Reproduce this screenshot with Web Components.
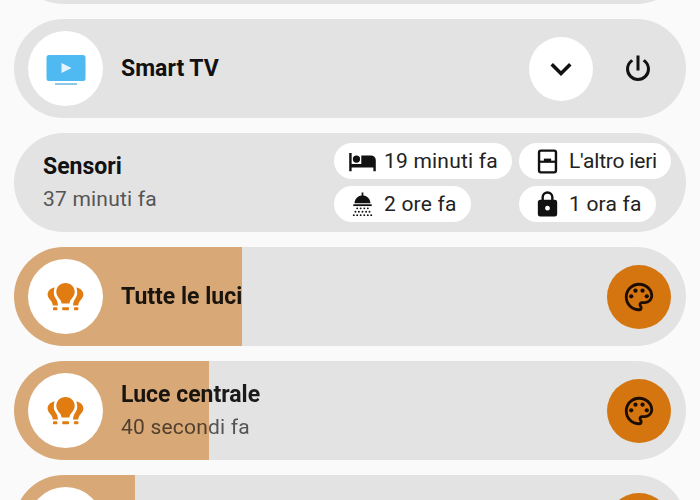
<!DOCTYPE html>
<html lang="it">
<head>
<meta charset="utf-8">
<title>Home</title>
<style>
    html, body { margin: 0; height: 100%; overflow: hidden; background: #fafafa; }
    body { font-family: Roboto, "Liberation Sans", sans-serif; }
</style>
</head>
<body>
<home-list>
    <home-card></home-card>

    <home-card>
        <icon-disc slot="icon">
            <svg style="margin-top:3px" width="40" height="30" viewBox="0 0 40 30">
                <rect x="0.5" y="0" width="39" height="26" rx="2.5" fill="#4fb9f2"/>
                <path d="M15.5 8L25.5 13L15.5 18Z" fill="#e4f4fd"/>
                <rect x="9" y="28" width="22" height="2" fill="#8cc9e6"/>
            </svg>
        </icon-disc>
        <span slot="title">Smart TV</span>
        <round-button slot="actions" kind="white">
            <svg width="42" height="42" viewBox="0 0 24 24"><path fill="#111" d="M7.41,8.58L12,13.17L16.59,8.58L18,10L12,16L6,10L7.41,8.58Z"/></svg>
        </round-button>
        <round-button slot="actions">
            <svg width="36" height="36" viewBox="0 0 24 24"><path fill="#111" d="M16.56,5.44L15.11,6.89C16.84,7.94 18,9.83 18,12A6,6 0 0,1 12,18A6,6 0 0,1 6,12C6,9.83 7.16,7.94 8.88,6.88L7.44,5.44C5.36,6.88 4,9.28 4,12A8,8 0 0,0 12,20A8,8 0 0,0 20,12C20,9.28 18.64,6.88 16.56,5.44M13,3H11V13H13"/></svg>
        </round-button>
    </home-card>

    <sensor-card title="Sensori" sub="37 minuti fa">
        <sensor-chip>
            <svg slot="icon" width="29" height="29" viewBox="0 0 24 24"><path d="M19,7H11V14H3V5H1V20H3V17H21V20H23V11A4,4 0 0,0 19,7M7,13A3,3 0 0,0 10,10A3,3 0 0,0 7,7A3,3 0 0,0 4,10A3,3 0 0,0 7,13Z"/></svg>
            19 minuti fa
        </sensor-chip>
        <sensor-chip style="letter-spacing:-.2px">
            <svg slot="icon" width="29" height="29" viewBox="0 0 24 24">
                <rect x="5" y="3" width="14" height="18" rx="1.5" fill="none" stroke="#111" stroke-width="2"/>
                <path d="M5 12.2H19" stroke="#111" stroke-width="1.8"/>
                <path d="M9 12V9.6H15V12Z"/>
            </svg>
            L'altro ieri
        </sensor-chip>
        <sensor-chip>
            <svg slot="icon" width="29" height="29" viewBox="0 0 24 24">
                <path d="M11.3 2H12.7V4.6C16 5 18.4 7.6 18.6 11H5.4C5.6 7.6 8 5 11.3 4.6Z"/>
                <rect x="4.4" y="11.8" width="15.2" height="1.5"/>
                <g>
                    <circle cx="7.6" cy="15.2" r=".8"/><circle cx="10.5" cy="15.2" r=".8"/><circle cx="13.5" cy="15.2" r=".8"/><circle cx="16.4" cy="15.2" r=".8"/>
                    <circle cx="6.2" cy="18" r=".8"/><circle cx="9" cy="18" r=".8"/><circle cx="12" cy="18" r=".8"/><circle cx="15" cy="18" r=".8"/><circle cx="17.8" cy="18" r=".8"/>
                    <circle cx="4.8" cy="20.8" r=".8"/><circle cx="7.6" cy="20.8" r=".8"/><circle cx="10.5" cy="20.8" r=".8"/><circle cx="13.5" cy="20.8" r=".8"/><circle cx="16.4" cy="20.8" r=".8"/><circle cx="19.2" cy="20.8" r=".8"/>
                </g>
            </svg>
            2 ore fa
        </sensor-chip>
        <sensor-chip>
            <svg slot="icon" width="29" height="29" viewBox="0 0 24 24"><path d="M12,17A2,2 0 0,0 14,15C14,13.89 13.1,13 12,13A2,2 0 0,0 10,15A2,2 0 0,0 12,17M18,8A2,2 0 0,1 20,10V20A2,2 0 0,1 18,22H6A2,2 0 0,1 4,20V10C4,8.89 4.9,8 6,8H7V6A5,5 0 0,1 12,1A5,5 0 0,1 17,6V8H18M12,3A3,3 0 0,0 9,6V8H15V6A3,3 0 0,0 12,3Z"/></svg>
            1 ora fa
        </sensor-chip>
    </sensor-card>

    <light-card name="Tutte le luci" level="228"></light-card>
    <light-card name="Luce centrale" sub="40 secondi fa" level="195"></light-card>
    <light-card level="121"></light-card>
</home-list>

<script>
class HomeList extends HTMLElement {
    constructor() {
        super();
        this.attachShadow({ mode: 'open' });
        this.shadowRoot.innerHTML = `
            <style>
                :host { display: flex; flex-direction: column; gap: 15px; padding: 0 14px; margin-top: -95px; }
            </style>
            <slot></slot>`;
    }
}
customElements.define('home-list', HomeList);

class HomeCard extends HTMLElement {
    constructor() {
        super();
        this.attachShadow({ mode: 'open' });
        this.shadowRoot.innerHTML = `
            <style>
                :host { display: flex; align-items: center; height: 99px; box-sizing: border-box; padding: 0 14px; background: #e3e3e3; border-radius: 50px; color: #111; }
                .text { flex: 1; margin-left: 18px; font-size: 23px; font-weight: 700; }
                .actions { display: flex; align-items: center; gap: 13px; margin-right: 2px; }
            </style>
            <slot name="icon"></slot>
            <div class="text"><slot name="title"></slot></div>
            <div class="actions"><slot name="actions"></slot></div>`;
    }
}
customElements.define('home-card', HomeCard);

class IconDisc extends HTMLElement {
    constructor() {
        super();
        this.attachShadow({ mode: 'open' });
        this.shadowRoot.innerHTML = `
            <style>
                :host { display: flex; align-items: center; justify-content: center; flex: none; width: 75px; height: 75px; border-radius: 50%; background: #fff; position: relative; z-index: 2; }
            </style>
            <slot></slot>`;
    }
}
customElements.define('icon-disc', IconDisc);

class RoundButton extends HTMLElement {
    constructor() {
        super();
        this.attachShadow({ mode: 'open' });
        this.shadowRoot.innerHTML = `
            <style>
                :host { display: flex; align-items: center; justify-content: center; flex: none; width: 64px; height: 64px; border-radius: 50%; position: relative; z-index: 2; }
                :host([kind="white"]) { background: #fff; }
                :host([kind="accent"]) { background: #d4750f; }
            </style>
            <slot></slot>`;
    }
}
customElements.define('round-button', RoundButton);

class SensorChip extends HTMLElement {
    constructor() {
        super();
        this.attachShadow({ mode: 'open' });
        this.shadowRoot.innerHTML = `
            <style>
                :host { display: inline-flex; align-items: center; gap: 7px; height: 36px; box-sizing: border-box; padding: 0 14px; background: #fff; border-radius: 18px; font-size: 21px; letter-spacing: .2px; color: #222; white-space: nowrap; justify-self: start; }
                slot[name="icon"]::slotted(svg) { fill: #111; }
            </style>
            <slot name="icon"></slot>
            <slot></slot>`;
    }
}
customElements.define('sensor-chip', SensorChip);

class SensorCard extends HTMLElement {
    constructor() {
        super();
        this.attachShadow({ mode: 'open' });
        this.shadowRoot.innerHTML = `
            <style>
                :host { display: flex; align-items: center; height: 99px; box-sizing: border-box; padding: 0 14px 0 29px; background: #e3e3e3; border-radius: 50px; }
                .text { flex: 1; }
                .title { font-size: 23px; font-weight: 700; line-height: 32px; color: #111; }
                .sub { font-size: 21px; line-height: 32px; letter-spacing: .2px; color: #555; }
                .chips { display: grid; grid-template-columns: 178px 153px; gap: 7px; }
            </style>
            <div class="text">
                <div class="title"></div>
                <div class="sub"></div>
            </div>
            <div class="chips"><slot></slot></div>`;
        this.shadowRoot.querySelector('.title').textContent = this.getAttribute('title');
        this.shadowRoot.querySelector('.sub').textContent = this.getAttribute('sub');
    }
}
customElements.define('sensor-card', SensorCard);

const lightTemplate = document.createElement('template');
lightTemplate.innerHTML = `
    <style>
        :host { display: flex; align-items: center; height: 99px; box-sizing: border-box; padding: 0 15px 0 14px; background: #e3e3e3; border-radius: 50px; overflow: hidden; position: relative; isolation: isolate; }
        .level { position: absolute; left: 0; top: 0; bottom: 0; background: #f4bd86; mix-blend-mode: multiply; z-index: 1; }
        .text { flex: 1; margin-left: 18px; white-space: nowrap; }
        .name { font-size: 23px; font-weight: 700; line-height: 32px; color: #1a1a1a; }
        .sub { font-size: 21px; line-height: 32px; letter-spacing: .2px; color: #555; }
        .sub:empty { display: none; }
        .bulb { fill: #e07c10; }
    </style>
    <div class="level"></div>
    <icon-disc>
        <svg class="bulb" width="37" height="29" viewBox="0 0 37 29">
            <path d="M18.5 1C13 1 9.3 5 9.3 10C9.3 13.3 11.4 15.5 13 17.5C13.8 18.5 14.4 19.8 14.5 21.5H22.5C22.6 19.8 23.2 18.5 24 17.5C25.6 15.5 27.7 13.3 27.7 10C27.7 5 24 1 18.5 1Z"/>
            <path d="M7.6 5.5C3.4 6.2 .6 9 .6 12.6C.6 15 2.2 16.8 3.7 18.6C4.8 19.9 5.6 21.4 5.8 23.4H11C10.8 20.2 9.8 18 8.6 16.2C7.4 14.5 6.8 12.8 6.8 11C6.8 9.2 7 7.2 7.6 5.5Z"/>
            <path d="M29.4 5.5C33.6 6.2 36.4 9 36.4 12.6C36.4 15 34.8 16.8 33.3 18.6C32.2 19.9 31.4 21.4 31.2 23.4H26C26.2 20.2 27.2 18 28.4 16.2C29.6 14.5 30.2 12.8 30.2 11C30.2 9.2 30 7.2 29.4 5.5Z"/>
            <rect x="15.2" y="25.2" width="6.8" height="3" rx=".8"/>
            <rect x="6" y="25.2" width="4.4" height="3" rx=".8"/>
            <rect x="27" y="25.2" width="4.4" height="3" rx=".8"/>
        </svg>
    </icon-disc>
    <div class="text">
        <div class="name"></div>
        <div class="sub"></div>
    </div>
    <round-button kind="accent">
        <svg width="34" height="34" viewBox="0 0 24 24" fill="#1c0d02">
            <path d="M12 22C6.49 22 2 17.51 2 12S6.49 2 12 2s10 4.04 10 9c0 3.31-2.69 6-6 6h-1.77c-.28 0-.5.22-.5.5 0 .12.05.23.13.33.41.47.64 1.06.64 1.67A2.5 2.5 0 0 1 12 22zm0-18c-4.41 0-8 3.59-8 8s3.59 8 8 8c.28 0 .5-.22.5-.5a.54.54 0 0 0-.14-.35c-.41-.46-.63-1.05-.63-1.65a2.5 2.5 0 0 1 2.5-2.5H16c2.21 0 4-1.79 4-4 0-3.86-3.59-7-8-7z"/>
            <circle cx="6.5" cy="11.5" r="1.5"/><circle cx="9.5" cy="7.5" r="1.5"/><circle cx="14.5" cy="7.5" r="1.5"/><circle cx="17.5" cy="11.5" r="1.5"/>
        </svg>
    </round-button>`;

class LightCard extends HTMLElement {
    constructor() {
        super();
        this.attachShadow({ mode: 'open' });
        this.shadowRoot.appendChild(lightTemplate.content.cloneNode(true));
        this.shadowRoot.querySelector('.name').textContent = this.getAttribute('name') || '';
        this.shadowRoot.querySelector('.sub').textContent = this.getAttribute('sub') || '';
        this.shadowRoot.querySelector('.level').style.width = this.getAttribute('level') + 'px';
    }
}
customElements.define('light-card', LightCard);
</script>
</body>
</html>
